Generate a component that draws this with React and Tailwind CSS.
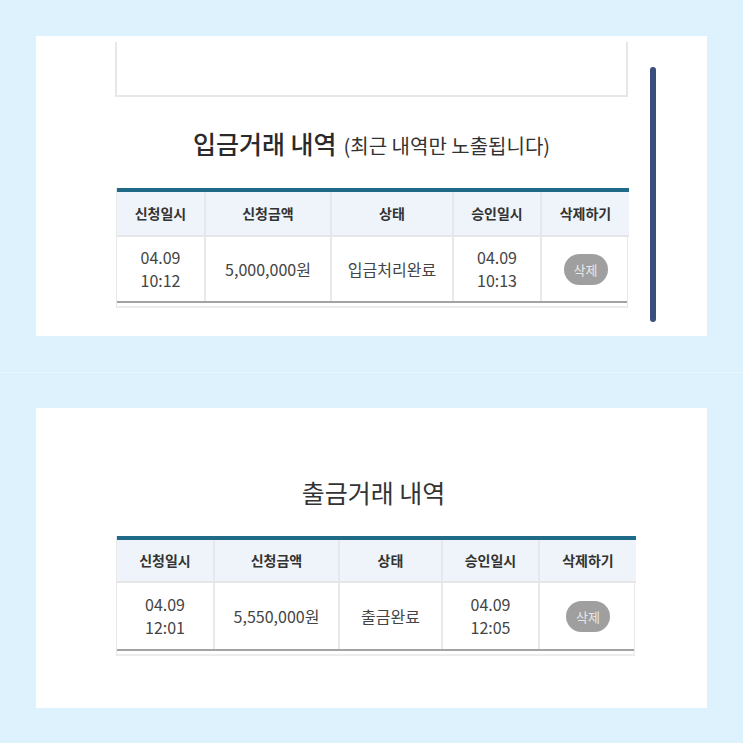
const font = { fontFamily: '"Noto Sans CJK KR", "Noto Sans", sans-serif' };

const deposits = {
  cols: ["w-[88px]", "w-[126px]", "w-[122px]", "w-[88px]", "w-[88px]"],
  row: { applied: ["04.09", "10:12"], amount: "5,000,000원", status: "입금처리완료", approved: ["04.09", "10:13"] },
};

const withdrawals = {
  cols: ["w-[97px]", "w-[125px]", "w-[103px]", "w-[97px]", "w-[97px]"],
  row: { applied: ["04.09", "12:01"], amount: "5,550,000원", status: "출금완료", approved: ["04.09", "12:05"] },
};

const heads = ["신청일시", "신청금액", "상태", "승인일시", "삭제하기"];

const HistoryTable = ({ data, width, headH, bodyH }) => {
  const { cols, row } = data;
  return (
    <div className={`${width} border-x border-[#e8e8e8]`}>
      <table className="w-full table-fixed border-collapse border-t-4 border-[#1f6a87]">
        <colgroup>
          {cols.map((c, i) => (
            <col key={i} className={c} />
          ))}
        </colgroup>
        <thead>
          <tr className={`${headH} bg-[#eef4f9]`}>
            {heads.map((h, i) => (
              <th
                key={h}
                className={`text-[14px] font-bold text-[#333] text-center align-middle ${
                  i < 4 ? "border-r-2 border-[#e4e8ec]" : ""
                }`}
              >
                {h}
              </th>
            ))}
          </tr>
        </thead>
        <tbody>
          <tr className={`${bodyH} border-t-2 border-[#e6e6e6] text-[16px] leading-[23px] text-[#444] text-center`}>
            <td className="border-r-2 border-[#e8e8e8] align-middle">
              {row.applied[0]}
              <br />
              {row.applied[1]}
            </td>
            <td className="border-r-2 border-[#e8e8e8] align-middle">{row.amount}</td>
            <td className="border-r-2 border-[#e8e8e8] align-middle">{row.status}</td>
            <td className="border-r-2 border-[#e8e8e8] align-middle">
              {row.approved[0]}
              <br />
              {row.approved[1]}
            </td>
            <td className="align-middle">
              <span className="mx-auto flex w-[44px] h-[31px] items-center justify-center rounded-full bg-[#9f9f9f] text-[13px] text-[#e8e8e8]">
                삭제
              </span>
            </td>
          </tr>
        </tbody>
      </table>
      <div className="h-[7px] border-t-2 border-[#a3a3a3] border-b-2 border-b-[#ececec]" />
    </div>
  );
};

export default function App() {
  return (
    <div className="w-[743px] h-[743px] bg-[#def2fd] overflow-hidden pt-[36px]" style={font}>
      {/* 입금 panel */}
      <div className="relative mx-[36px] h-[300px] bg-white pt-[6px]">
        <div className="ml-[79px] w-[513px] h-[55px] border-x-2 border-b-2 border-[#e7e7e7]" />
        <h2 className="mt-[30px] text-center text-[#2a2a2a] leading-[32px]">
          <span className="text-[25px] font-medium">입금거래 내역</span>
          <span className="ml-[7px] text-[20px] text-[#333]">(최근 내역만 노출됩니다)</span>
        </h2>
        <div className="mt-[25px] ml-[80px]">
          <HistoryTable data={deposits} width="w-[512px]" headH="h-[46px]" bodyH="h-[65px]" />
        </div>
        {/* scrollbar */}
        <div className="absolute left-[614px] top-[31px] w-[6px] h-[255px] rounded-full bg-[#3a4f7e]" />
      </div>

      <div className="h-[72px] flex flex-col justify-center">
        <div className="h-px bg-[#e8f7fe]" />
      </div>

      {/* 출금 panel */}
      <div className="mx-[36px] h-[300px] bg-white pt-[68px]">
        <h2 className="ml-[4px] text-center text-[25px] leading-[32px] text-[#333]">출금거래 내역</h2>
        <div className="mt-[28px] ml-[80px]">
          <HistoryTable data={withdrawals} width="w-[519px]" headH="h-[44px]" bodyH="h-[67px]" />
        </div>
      </div>
    </div>
  );
}
